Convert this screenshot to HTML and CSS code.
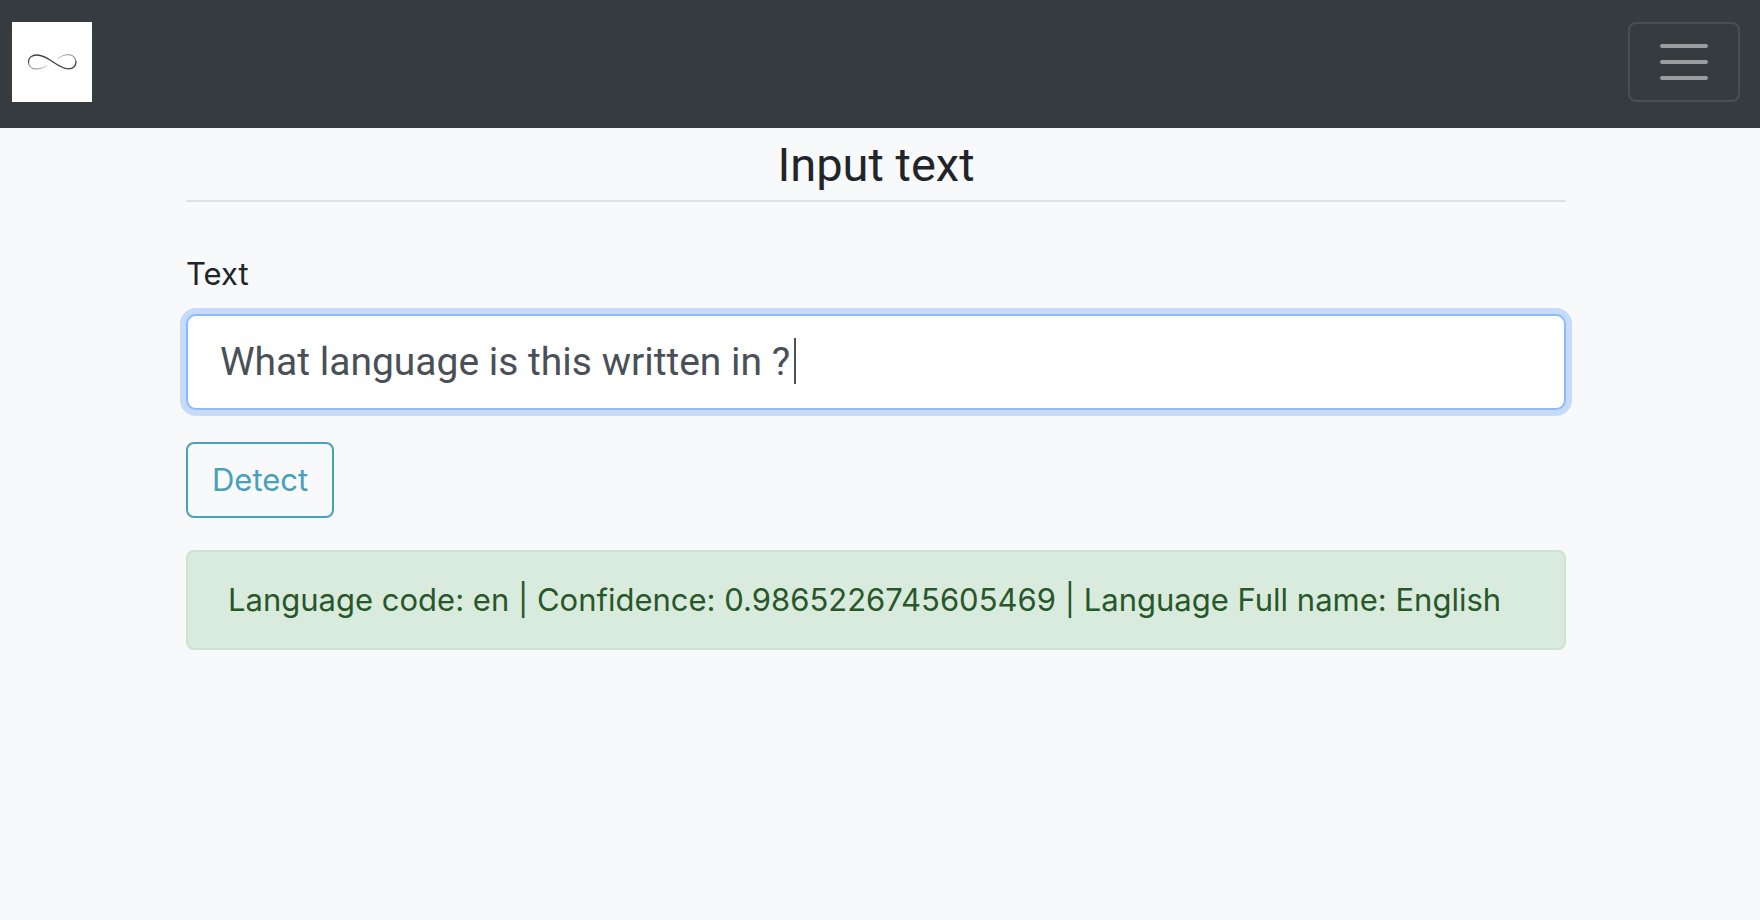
FILE: index.html
```html
<!DOCTYPE html>
<html lang="en">
<head>
<meta charset="utf-8">
<title>Language detection</title>
<link rel="stylesheet" href="styles.css">
</head>
<body>
<nav class="navbar">
  <a class="brand" href="#" aria-label="Home">
    <svg class="brand-logo" viewBox="0 0 80 80" fill="none" stroke-linecap="round" aria-hidden="true">
      <defs>
        <linearGradient id="fade-left" gradientUnits="userSpaceOnUse" x1="16" y1="40" x2="36" y2="46">
          <stop offset="0" stop-color="#555"/><stop offset="1" stop-color="#ccc"/>
        </linearGradient>
        <linearGradient id="fade-right" gradientUnits="userSpaceOnUse" x1="64" y1="40" x2="45" y2="34">
          <stop offset="0" stop-color="#555"/><stop offset="1" stop-color="#ccc"/>
        </linearGradient>
      </defs>
      <path d="M16.500 40C16.500 43.500 19 47 24 47C28.500 47 32 45.500 34.500 43.700" stroke="url(#fade-left)"/>
      <path d="M64 40C64 36 61 32.700 56 32.700C52 32.700 48.500 34.500 46 36.500" stroke="url(#fade-right)"/>
      <path d="M16.500 40C16.500 36 19.500 33 25 33C37 33 45 46.800 56.500 46.800C61.500 46.800 64 43.500 64 40" stroke="#444" stroke-width="1.300"/>
    </svg>
  </a>
  <button class="menu-toggle" type="button" aria-label="Toggle navigation">
    <svg class="menu-icon" viewBox="0 0 60 60" fill="none" stroke-width="4" stroke-linecap="round" aria-hidden="true">
      <path d="M8 14H52M8 30H52M8 46H52"/>
    </svg>
  </button>
</nav>
<main class="content">
  <h1 class="title">Input text</h1>
  <form class="detect-form">
    <label class="label" for="text">Text</label>
    <div class="field">
      <input class="text-input" id="text" type="text" value="What language is this written in ?">
      <span class="caret" aria-hidden="true"></span>
    </div>
    <button class="detect-button" type="button">Detect</button>
  </form>
  <div class="result" role="alert">Language code: en | Confidence: 0.9865226745605469 | Language Full name: English</div>
</main>
</body>
</html>
```
FILE: styles.css
```css
* {
  box-sizing: border-box;
}

body {
  margin: 0;
  background: #f8f9fb;
  color: #212529;
  font-family: Inter, "Liberation Sans", sans-serif;
  font-size: 31px;
  line-height: 48px;
}

.navbar {
  display: flex;
  align-items: center;
  justify-content: space-between;
  padding: 22px 20px 26px 12px;
  background: #363b3f;
}

.brand,
.brand-logo,
.menu-icon {
  display: block;
}

.brand-logo {
  width: 80px;
  height: 80px;
  background: #fff;
}

.menu-toggle {
  padding: 8px 24px;
  border: 2px solid #4a4e52;
  border-radius: 8px;
  background: transparent;
}

.menu-icon {
  width: 60px;
  height: 60px;
  stroke: #9a9d9f;
}

.content {
  padding: 8px 194px 0 186px;
}

.title {
  margin: 0 0 48px;
  padding-bottom: 6px;
  border-bottom: 2px solid #dee2e6;
  font-family: Roboto, "Liberation Sans", sans-serif;
  font-size: 47px;
  font-weight: 400;
  line-height: 58px;
  text-align: center;
}

.detect-form {
  display: flex;
  flex-direction: column;
  align-items: flex-start;
}

.label {
  margin-bottom: 16px;
}

.field {
  position: relative;
  width: 100%;
  margin-bottom: 32px;
}

.text-input {
  display: block;
  width: 100%;
  height: 96px;
  padding: 0 32px;
  border: 2px solid #8cbafb;
  border-radius: 10px;
  outline: 0;
  background: #fff;
  box-shadow: 0 0 0 6px #c6dbfa;
  color: #495057;
  font-family: Roboto, "Liberation Sans", sans-serif;
  font-size: 39px;
}

.caret {
  position: absolute;
  top: 24px;
  left: 608px;
  width: 2px;
  height: 46px;
  background: #495057;
}

.detect-button {
  margin-bottom: 32px;
  padding: 12px 24px;
  border: 2px solid #48a1b8;
  border-radius: 8px;
  background: transparent;
  color: #48a1b8;
  font: inherit;
}

.result {
  padding: 24px 40px;
  border: 2px solid #c9e6cd;
  border-radius: 8px;
  background: #d9ebdc;
  color: #28572b;
}
```
